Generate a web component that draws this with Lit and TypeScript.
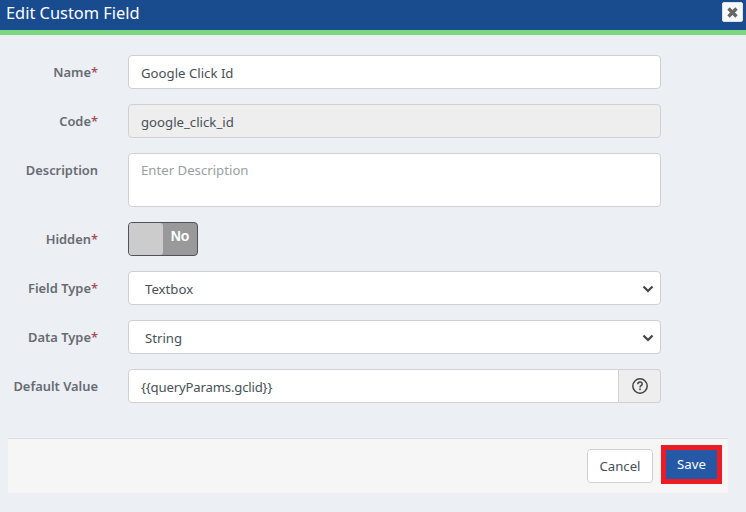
import { LitElement, html, css } from 'lit';
import { customElement } from 'lit/decorators.js';

@customElement('app-root')
export class AppRoot extends LitElement {
  static styles = css`
    :host {
      display: block;
      width: 746px;
      height: 512px;
      background: #eceff4;
      font-family: "Noto Sans", "Open Sans", sans-serif;
      font-size: 13.2px;
      color: #495057;
      overflow: hidden;
    }
    .header {
      height: 30px;
      background: #194b8f;
      border-bottom: 5px solid #7ad67f;
      display: flex;
      justify-content: space-between;
      align-items: flex-start;
      padding: 0 3px 0 6px;
    }
    .title {
      color: #fff;
      font-size: 16.400px;
      line-height: 26px;
    }
    .close {
      width: 21px;
      height: 20px;
      margin-top: 2px;
      box-sizing: border-box;
      background: #f8f9fa;
      border: 1px solid #dee2e6;
      border-radius: 2px;
      display: flex;
      align-items: center;
      justify-content: center;
    }
    .form {
      display: flex;
      flex-direction: column;
      gap: 15px;
      padding: 20px 85px 0 0;
    }
    .row {
      display: grid;
      grid-template-columns: 98px 533px;
      column-gap: 30px;
      align-items: start;
    }
    .label {
      text-align: right;
      font-weight: 600;
      color: #666b73;
      font-size: 12.900px;
      line-height: 34px;
      white-space: nowrap;
    }
    .label b {
      color: #a8505f;
      font-weight: 600;
    }
    .control {
      box-sizing: border-box;
      height: 34px;
      background: #fff;
      border: 1px solid #ced0d2;
      border-radius: 4px;
      padding: 1px 12px 0;
      line-height: 32px;
      color: #495057;
      white-space: nowrap;
    }
    .readonly {
      background: #eeeeee;
    }
    .area {
      height: 54px;
      padding-top: 0;
      color: #9a9ea3;
    }
    .select {
      display: flex;
      align-items: center;
      justify-content: space-between;
      padding: 1px 6px 0 16px;
    }
    .group {
      display: flex;
      height: 34px;
    }
    .group .control {
      flex: 1;
      border-radius: 4px 0 0 4px;
      letter-spacing: -0.2px;
    }
    .addon {
      box-sizing: border-box;
      width: 42px;
      background: #eeeeee;
      border: 1px solid #ced0d2;
      border-left: 0;
      border-radius: 0 4px 4px 0;
      display: flex;
      align-items: center;
      justify-content: center;
    }
    .toggle {
      box-sizing: border-box;
      width: 70px;
      height: 34px;
      border: 1px solid #4f5256;
      border-radius: 4px;
      background: #999999;
      display: flex;
      overflow: hidden;
    }
    .knob {
      width: 34px;
      background: #cccccc;
      border-radius: 0 3px 3px 0;
    }
    .state {
      flex: 1;
      color: #fff;
      font-family: "Liberation Sans", Arial, sans-serif;
      font-weight: 700;
      font-size: 14px;
      text-align: center;
      line-height: 26px;
    }
    .footer {
      box-sizing: border-box;
      width: 720px;
      height: 55px;
      margin: 35px 0 0 8px;
      background: #f6f6f6;
      border-top: 1px solid #dcdcdc;
      display: flex;
      justify-content: flex-end;
      align-items: flex-start;
      gap: 8px;
      padding: 6px 6px 0 0;
    }
    .cancel {
      box-sizing: border-box;
      width: 66px;
      height: 34px;
      margin-top: 4px;
      background: #fff;
      border: 1px solid #ced0d2;
      border-radius: 4px;
      color: #495057;
      text-align: center;
      line-height: 32px;
    }
    .save {
      box-sizing: border-box;
      width: 61px;
      height: 39px;
      background: #2558a5;
      border: 5px solid #ed1c24;
      color: #fff;
      text-align: center;
      line-height: 29px;
    }
  `;

  private chevron() {
    return html`<svg width="12" height="8" viewBox="0 0 12 8">
      <path d="M1.5 1.5 6 6l4.5-4.5" fill="none" stroke="#444" stroke-width="2.2" />
    </svg>`;
  }

  render() {
    return html`
      <div class="header">
        <div class="title">Edit Custom Field</div>
        <div class="close">
          <svg width="13" height="13" viewBox="0 0 13 13">
            <path d="M2.500 2.500l8 8M10.500 2.500l-8 8" stroke="#666" stroke-width="3.400" />
          </svg>
        </div>
      </div>
      <div class="form">
        <div class="row">
          <div class="label">Name<b>*</b></div>
          <div class="control">Google Click Id</div>
        </div>
        <div class="row">
          <div class="label">Code<b>*</b></div>
          <div class="control readonly">google_click_id</div>
        </div>
        <div class="row">
          <div class="label">Description</div>
          <div class="control area">Enter Description</div>
        </div>
        <div class="row">
          <div class="label">Hidden<b>*</b></div>
          <div class="toggle"><div class="knob"></div><div class="state">No</div></div>
        </div>
        <div class="row">
          <div class="label">Field Type<b>*</b></div>
          <div class="control select">Textbox ${this.chevron()}</div>
        </div>
        <div class="row">
          <div class="label">Data Type<b>*</b></div>
          <div class="control select">String ${this.chevron()}</div>
        </div>
        <div class="row">
          <div class="label">Default Value</div>
          <div class="group">
            <div class="control">{{queryParams.gclid}}</div>
            <div class="addon">
              <svg width="16" height="16" viewBox="0 0 16 16">
                <circle cx="8" cy="8" r="7.200" fill="none" stroke="#444" stroke-width="1.500" />
                <path d="M5.800 6.200c0-3 4.400-3 4.400-.2 0 1.700-2.200 1.700-2.200 3.400" fill="none" stroke="#444" stroke-width="1.500" />
                <rect x="7.200" y="10.500" width="1.600" height="1.700" fill="#444" />
              </svg>
            </div>
          </div>
        </div>
      </div>
      <div class="footer">
        <div class="cancel">Cancel</div>
        <div class="save">Save</div>
      </div>
    `;
  }
}
